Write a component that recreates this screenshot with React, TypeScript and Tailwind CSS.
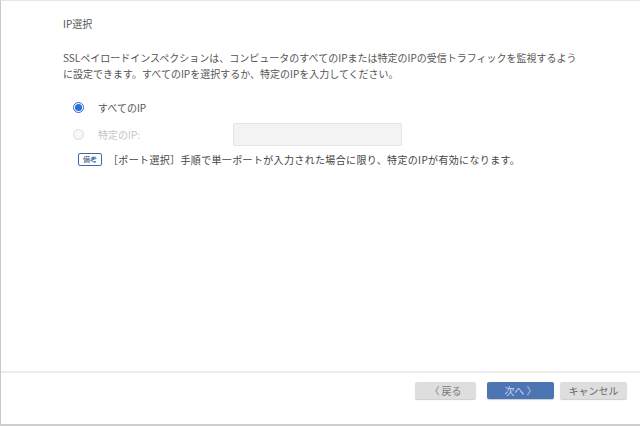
import React from "react";

const font = { fontFamily: '"Noto Sans CJK JP", "Noto Sans", sans-serif' };

function Radio({ checked, disabled }: { checked?: boolean; disabled?: boolean }) {
  if (checked) {
    return (
      <span className="flex h-[11px] w-[11px] items-center justify-center rounded-full border border-[#2a6fd6] bg-white">
        <span className="h-[7px] w-[7px] rounded-full bg-[#2a6fd6]" />
      </span>
    );
  }
  return (
    <span
      className={
        disabled
          ? "h-[11px] w-[11px] rounded-full border border-[#dcdcdc] bg-[#f7f7f7]"
          : "h-[11px] w-[11px] rounded-full border border-[#888] bg-white"
      }
    />
  );
}

export default function App() {
  return (
    <div
      className="flex h-[426px] w-[640px] flex-col overflow-hidden border-l border-t border-b-2 border-l-[#c8c8c8] border-t-[#e6e6e6] border-b-[#cfcfcf] bg-white text-[10px] text-[#555]"
      style={font}
    >
      <div className="flex-1 pl-[62px] pt-[16px]">
        <h1 className="text-[10px] font-normal leading-[14px]">IP選択</h1>
        <p className="mt-[19px] leading-[16px]">
          SSLペイロードインスペクションは、コンピュータのすべてのIPまたは特定のIPの受信トラフィックを監視するよう
          <br />
          に設定できます。すべてのIPを選択するか、特定のIPを入力してください。
        </p>

        <div className="mt-[16px] flex flex-col pl-[10px]">
          <label className="flex h-[19px] items-center">
            <Radio checked />
            <span className="ml-[14px]">すべてのIP</span>
          </label>
          <div className="mt-[5px] flex h-[24px] items-center">
            <Radio disabled />
            <span className="ml-[14px] w-[135px] text-[#c4c4c4]">特定のIP:</span>
            <div className="h-[23px] w-[169px] rounded-[2px] border border-[#e4e4e4] bg-[#f3f3f3]" />
          </div>
          <div className="mt-[6px] flex items-center">
            <span className="ml-[5px] flex h-[13px] w-[24px] items-center justify-center rounded-[2px] border-[1.5px] border-[#3f6aa6] text-[7px] leading-none text-[#2c4f80]">
              備考
            </span>
            <span className="ml-[6px] tracking-[0.35px] text-[#444]">
              ［ポート選択］手順で単一ポートが入力された場合に限り、特定のIPが有効になります。
            </span>
          </div>
        </div>
      </div>

      <div className="h-[2px] bg-[#ededed]" />
      <div className="flex h-[51px] items-start justify-end pr-[13px] pt-[9px]">
        <button
          type="button"
          className="mr-[11px] h-[17px] w-[61px] rounded-[2px] bg-[#dedede] text-[10px] leading-none text-[#7a7a7a] shadow-[0_1px_1px_rgba(0,0,0,0.2)]"
        >
          〈 戻る
        </button>
        <button
          type="button"
          className="mr-[6px] h-[17px] w-[67px] rounded-[2px] bg-[#4d74b3] text-[10px] leading-none text-[#c9d6ec] shadow-[0_1px_1px_rgba(0,0,0,0.2)]"
        >
          次へ 〉
        </button>
        <button
          type="button"
          className="h-[17px] w-[67px] rounded-[2px] bg-[#dedede] text-[10px] leading-none text-[#666] shadow-[0_1px_1px_rgba(0,0,0,0.2)]"
        >
          キャンセル
        </button>
      </div>
    </div>
  );
}
